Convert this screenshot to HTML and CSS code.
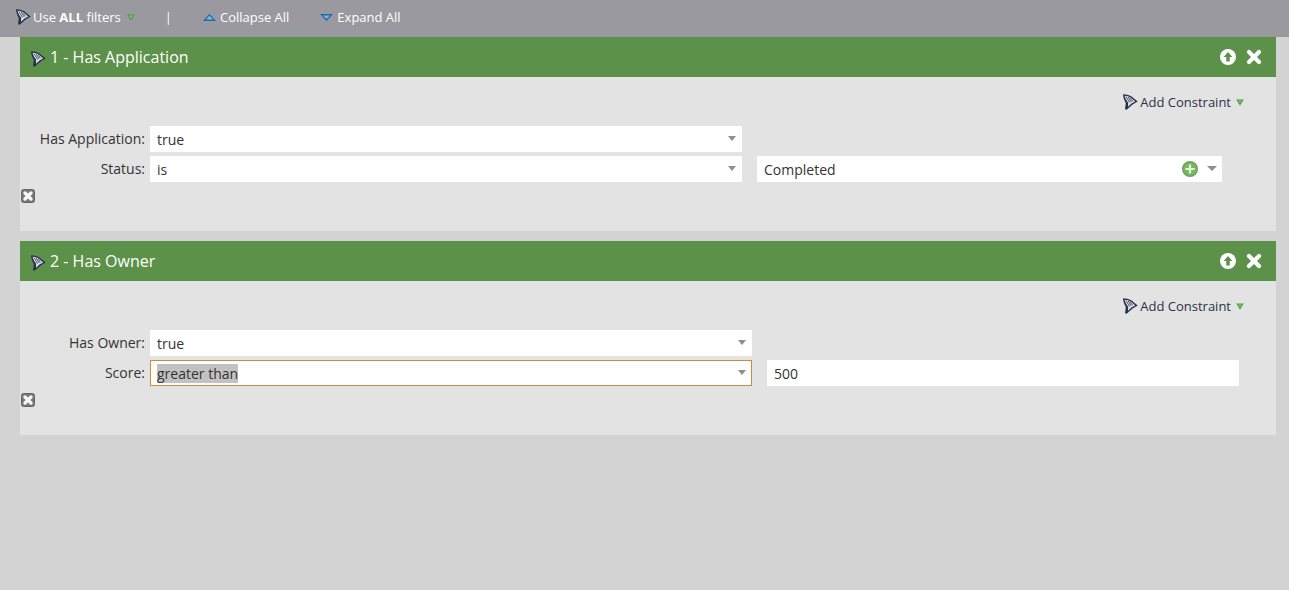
FILE: index.html
```html
<!DOCTYPE html>
<html lang="en">
<head>
<meta charset="utf-8">
<title>Filters</title>
<link rel="stylesheet" href="styles.css">
</head>
<body>
<svg class="defs" width="0" height="0" aria-hidden="true">
  <symbol id="funnel" viewBox="0 0 16 16">
    <path d="M1 .3 C5 .3 9.2 1.8 12 4.4 L15.7 7.6 L11 10.2 L4.6 15.8 L3 15.2 L3.8 9 C2.3 6.5 1.1 3.5 1 .3Z" fill="#2a3049"/>
    <path d="M2.6 1.8 C5.6 1.9 8.8 3.4 11 5.4 L13.2 7.5 L9.8 9.2 L6 12.8 L6.1 8.6 C4.4 6.5 3 4.2 2.6 1.8Z" fill="#dfe3ec"/>
    <path d="M4 2.6 L7.6 8.6 M6.2 3 L9.2 8 M8.4 4.2 L10.6 7.4" stroke="#4c5570" stroke-width="1" fill="none"/>
  </symbol>
  <symbol id="caret-green" viewBox="0 0 9 8">
    <path d="M.3 .6 H8.7 L4.5 7.8Z" fill="#4f9a3f"/>
    <path d="M2.4 1.6 H6.6 L4.5 4.8Z" fill="#86cc6e"/>
  </symbol>
</svg>

<div class="toolbar">
  <span class="tool tool-filters">
    <svg class="funnel"><use href="#funnel"/></svg>
    <span>Use <b>ALL</b> filters</span>
    <svg class="caret-green"><use href="#caret-green"/></svg>
  </span>
  <span class="tool-sep">|</span>
  <span class="tool tool-collapse">
    <svg class="tri" viewBox="0 0 13 7"><path d="M6.5 0 L13 7 H0Z" fill="#1f6aa3"/><path d="M6.5 1.8 L10 5.4 H3Z" fill="#7fb9e2"/></svg>
    <span>Collapse All</span>
  </span>
  <span class="tool tool-expand">
    <svg class="tri" viewBox="0 0 13 7"><path d="M0 0 H13 L6.5 7Z" fill="#1f6aa3"/><path d="M3 1.4 H10 L6.5 5Z" fill="#7fb9e2"/></svg>
    <span>Expand All</span>
  </span>
</div>

<section class="panel">
  <header class="panel-head">
    <svg class="funnel funnel-head"><use href="#funnel"/></svg>
    <h2 class="panel-title">1 - Has Application</h2>
    <svg class="head-icon" viewBox="0 0 16 16"><circle cx="8" cy="8" r="8" fill="#fff"/><path d="M8 3 L12.4 8 H9.7 V12.6 H6.3 V8 H3.6Z" fill="#5c9149"/></svg>
    <svg class="head-icon head-close" viewBox="0 0 16 16"><path d="M3 3 L13 13 M13 3 L3 13" stroke="#fff" stroke-width="4.2" stroke-linecap="round"/></svg>
  </header>
  <div class="panel-body">
    <div class="actions">
      <svg class="funnel"><use href="#funnel"/></svg>
      <span>Add Constraint</span>
      <svg class="caret-green"><use href="#caret-green"/></svg>
    </div>
    <div class="row">
      <label class="label">Has Application:</label>
      <div class="field select-a"><span>true</span><i class="arrow"></i></div>
    </div>
    <div class="row">
      <label class="label">Status:</label>
      <div class="field select-a"><span>is</span><i class="arrow"></i></div>
      <div class="field value-a">
        <span>Completed</span>
        <svg class="plus" viewBox="0 0 16 16"><circle cx="8" cy="8" r="8" fill="#7c9576"/><circle cx="8" cy="8" r="6.6" fill="#6dbf55"/><path d="M8 3.4 V12.6 M3.4 8 H12.6" stroke="#eaf7e4" stroke-width="2.2"/></svg>
        <i class="arrow arrow-value"></i>
      </div>
    </div>
    <svg class="remove" viewBox="0 0 14 14"><rect x=".5" y=".5" width="13" height="13" rx="2" fill="#787878" stroke="#666"/><path d="M4 4 L10 10 M10 4 L4 10" stroke="#f6f6f6" stroke-width="3.4" stroke-linecap="round"/></svg>
  </div>
</section>

<section class="panel">
  <header class="panel-head">
    <svg class="funnel funnel-head"><use href="#funnel"/></svg>
    <h2 class="panel-title">2 - Has Owner</h2>
    <svg class="head-icon" viewBox="0 0 16 16"><circle cx="8" cy="8" r="8" fill="#fff"/><path d="M8 3 L12.4 8 H9.7 V12.6 H6.3 V8 H3.6Z" fill="#5c9149"/></svg>
    <svg class="head-icon head-close" viewBox="0 0 16 16"><path d="M3 3 L13 13 M13 3 L3 13" stroke="#fff" stroke-width="4.2" stroke-linecap="round"/></svg>
  </header>
  <div class="panel-body">
    <div class="actions">
      <svg class="funnel"><use href="#funnel"/></svg>
      <span>Add Constraint</span>
      <svg class="caret-green"><use href="#caret-green"/></svg>
    </div>
    <div class="row">
      <label class="label">Has Owner:</label>
      <div class="field select-b"><span>true</span><i class="arrow"></i></div>
    </div>
    <div class="row">
      <label class="label">Score:</label>
      <div class="field select-b field-focus"><span class="selected">greater than</span><i class="arrow"></i></div>
      <div class="field value-b"><span>500</span></div>
    </div>
    <svg class="remove" viewBox="0 0 14 14"><rect x=".5" y=".5" width="13" height="13" rx="2" fill="#787878" stroke="#666"/><path d="M4 4 L10 10 M10 4 L4 10" stroke="#f6f6f6" stroke-width="3.4" stroke-linecap="round"/></svg>
  </div>
</section>
</body>
</html>
```
FILE: styles.css
```css
* { box-sizing: border-box; }
html, body { height: 100%; }
body {
  margin: 0;
  background: #d3d3d3;
  font-family: "Open Sans", "Liberation Sans", sans-serif;
  font-size: 14px;
  color: #333;
  overflow: hidden;
}
.defs { display: block; height: 0; }

.toolbar {
  height: 37px;
  background: #9a999f;
  display: flex;
  align-items: center;
  color: #fff;
  font-size: 13px;
  padding: 0 0 3px 15px;
}
.tool { display: flex; align-items: center; }
.tool-sep { margin-left: 30px; margin-right: 31px; font-size: 13px; }
.tool-expand { margin-left: 31px; }
.tri { width: 13px; height: 7px; margin-right: 4px; }
.funnel { width: 16px; height: 16px; flex: none; }
.tool-filters .funnel { margin-right: 2px; }
.caret-green { width: 8px; height: 7px; flex: none; }
.tool-filters .caret-green { margin-left: 6px; }

.panel { margin: 0 13px 10px 20px; }
.panel-head {
  height: 40px;
  background: #5c9149;
  display: flex;
  align-items: center;
  padding: 0 14px 0 10px;
  color: #fff;
}
.funnel-head { margin-right: 4px; margin-top: 3px; }
.panel-title { margin: 0; flex: 1; font-size: 16px; font-weight: 400; }
.head-icon { width: 16px; height: 16px; }
.head-close { margin-left: 10px; }

.panel-body {
  height: 154px;
  background: #e3e3e3;
  padding-top: 17px;
}
.actions {
  height: 16px;
  display: flex;
  align-items: center;
  justify-content: flex-end;
  padding-right: 32px;
  font-size: 13px;
  margin-bottom: 16px;
  color: #2b3148;
}
.actions .funnel { margin-right: 2px; }
.actions .caret-green { margin-left: 5px; }

.row { display: flex; align-items: center; height: 26px; margin-bottom: 4px; }
.label { width: 125px; text-align: right; margin-right: 5px; font-size: 14px; line-height: 26px; }
.field {
  height: 26px;
  background: #fff;
  display: flex;
  align-items: center;
  padding-left: 7px;
  font-size: 14px;
  color: #333;
}
.field > span { flex: 1; }
.select-a { width: 592px; }
.select-b { width: 602px; }
.value-a { width: 465px; margin-left: 15px; }
.value-b { width: 472px; margin-left: 15px; }
.field-focus { border: 1px solid #cf8a3e; padding-left: 6px; }
.selected { flex: none !important; background: #c2c2c2; }
.field-focus .selected { margin-right: auto; }
.arrow {
  width: 0;
  height: 0;
  border-left: 5px solid transparent;
  border-right: 5px solid transparent;
  border-top: 5px solid #8e8e8e;
  margin-right: 5px;
  margin-bottom: 2px;
}
.select-a .arrow, .select-b .arrow { margin-right: 6px; border-left-width: 4.5px; border-right-width: 4.5px; }
.field-focus .arrow { margin-right: 5px; }
.plus { width: 16px; height: 16px; margin-right: 9px; }
.remove { display: block; width: 14px; height: 14px; margin: 7px 0 0 1px; }
```
